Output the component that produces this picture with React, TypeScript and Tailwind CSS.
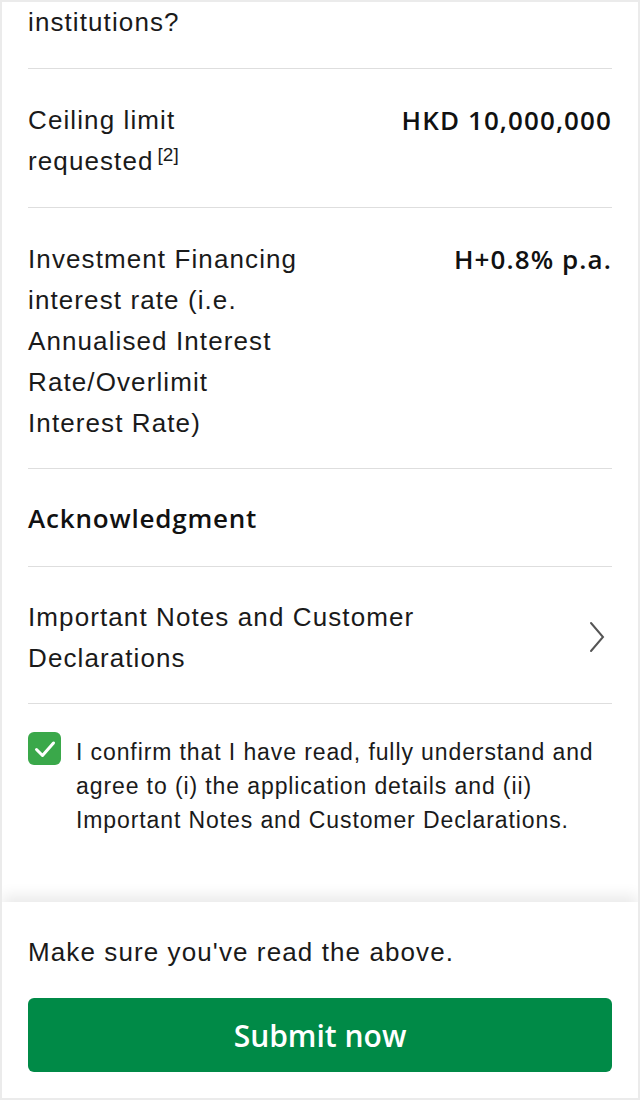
import React from 'react';

const body = { fontFamily: '"Liberation Sans", Arial, sans-serif' };
const bold = { fontFamily: '"Open Sans", "Liberation Sans", sans-serif' };

function Row({ label, value, pb }: { label: React.ReactNode; value: string; pb: string }) {
  return (
    <div className={`flex justify-between gap-6 border-b border-[#dedede] pt-[31px] ${pb}`}>
      <div className="w-[276px] text-[26px] leading-[41px] tracking-[1.1px] text-[#1a1a1a]" style={body}>
        {label}
      </div>
      <div className="text-[26px] leading-[41px] font-semibold tracking-[1.1px] text-[#111] text-right" style={bold}>
        {value}
      </div>
    </div>
  );
}

export default function App() {
  return (
    <div className="w-[640px] h-[1100px] flex flex-col bg-white border-2 border-[#ebebeb] overflow-hidden">
      {/* scrolled content */}
      <div className="flex-1 overflow-hidden px-[26px]">
        <div className="border-b border-[#dedede] pb-[25px]">
          <p className="text-[26px] leading-[41px] tracking-[1.1px] text-[#1a1a1a]" style={body}>
            institutions?
          </p>
        </div>

        <Row
          label={
            <>
              Ceiling limit requested
              <sup className="text-[19px] leading-none tracking-normal ml-1 relative -top-[9px]">[2]</sup>
            </>
          }
          value="HKD 10,000,000"
          pb="pb-[25px]"
        />
        <Row
          label="Investment Financing interest rate (i.e. Annualised Interest Rate/Overlimit Interest Rate)"
          value="H+0.8% p.a."
          pb="pb-[24px]"
        />

        <div className="border-b border-[#dedede] pt-[29px] pb-[27px]">
          <h2 className="text-[26px] leading-[41px] font-semibold tracking-[0.8px] text-[#111]" style={bold}>
            Acknowledgment
          </h2>
        </div>

        <div className="flex items-center justify-between border-b border-[#dedede] pt-[30px] pb-[24px]">
          <p className="w-[500px] text-[26px] leading-[41px] tracking-[1.1px] text-[#1a1a1a]" style={body}>
            Important Notes and Customer Declarations
          </p>
          <svg width="18" height="32" viewBox="0 0 18 32" className="mr-[6px] -mt-[2px]">
            <path d="M3 2 L15 16 L3 30" fill="none" stroke="#555" strokeWidth="2" strokeLinecap="round" />
          </svg>
        </div>

        <div className="flex gap-[15px] pt-[28px]">
          <div className="shrink-0 w-[33px] h-[33px] rounded-[6px] bg-[#3aa84a] flex items-center justify-center">
            <svg width="24" height="24" viewBox="0 0 24 24">
              <path d="M3.5 12.5 L9.5 18.5 L20.5 6" fill="none" stroke="#fff" strokeWidth="3" strokeLinecap="round" strokeLinejoin="round" />
            </svg>
          </div>
          <p className="mt-[3px] text-[23px] leading-[34px] tracking-[0.9px] text-[#1a1a1a]" style={body}>
            I confirm that I have read, fully understand and agree to (i) the application details and (ii) Important Notes and Customer Declarations.
          </p>
        </div>
      </div>

      {/* sticky footer */}
      <div className="h-[196px] shrink-0 bg-white px-[26px] pt-[31px] shadow-[0_-6px_14px_rgba(0,0,0,0.09)] relative">
        <p className="text-[26px] leading-[38px] tracking-[1.1px] text-[#1a1a1a]" style={body}>
          Make sure you've read the above.
        </p>
        <button
          className="mt-[27px] w-full h-[74px] rounded-[6px] bg-[#008a47] text-white text-[30px] font-semibold"
          style={bold}
        >
          Submit now
        </button>
      </div>
    </div>
  );
}
